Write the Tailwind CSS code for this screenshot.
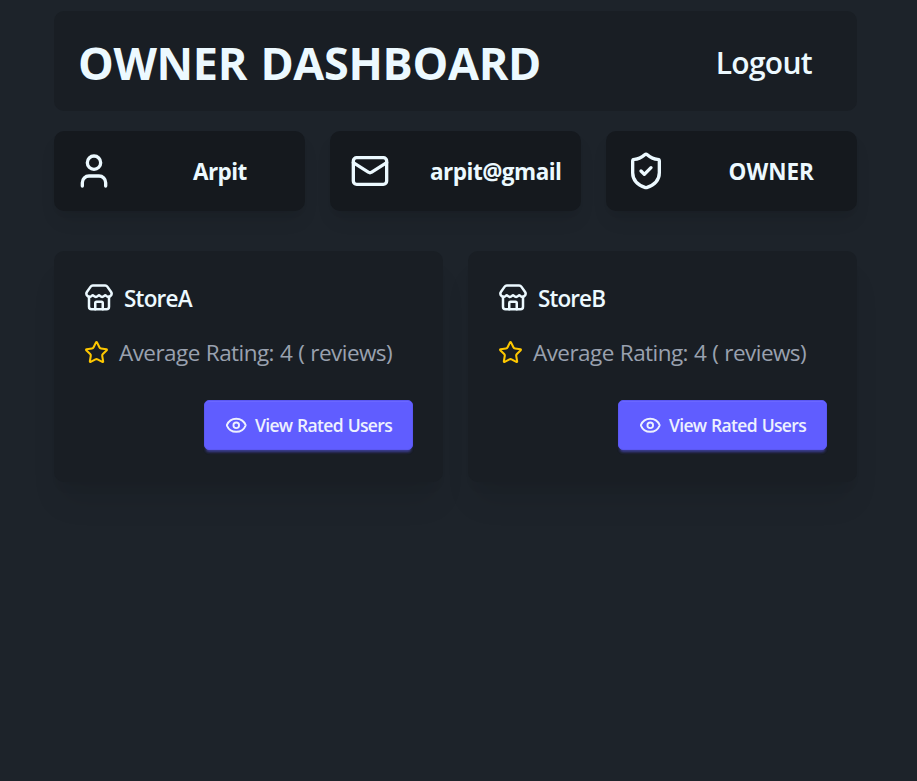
<!DOCTYPE html>
<html lang="en">
<head>
<meta charset="utf-8">
<title>Owner Dashboard</title>
<script src="https://cdn.jsdelivr.net/npm/@tailwindcss/browser@4"></script>
</head>
<body class="bg-[#1d232a] text-[#ecf9ff] font-['Open_Sans','Noto_Sans',sans-serif] min-h-screen">
<svg class="hidden">
  <symbol id="store" viewBox="0 0 24 24"><path d="M15 21v-5a1 1 0 0 0-1-1h-4a1 1 0 0 0-1 1v5"/><path d="M17.774 10.31a1.12 1.12 0 0 0-1.549 0 2.5 2.5 0 0 1-3.451 0 1.12 1.12 0 0 0-1.548 0 2.5 2.5 0 0 1-3.452 0 1.12 1.12 0 0 0-1.549 0 2.5 2.5 0 0 1-3.77-3.248l2.889-4.184A2 2 0 0 1 7 2h10a2 2 0 0 1 1.653.873l2.895 4.192a2.5 2.5 0 0 1-3.774 3.244"/><path d="M4 10.95V19a2 2 0 0 0 2 2h12a2 2 0 0 0 2-2v-8.05"/></symbol>
  <symbol id="star" viewBox="0 0 24 24"><path d="M11.525 2.295a.53.53 0 0 1 .95 0l2.31 4.679a2.123 2.123 0 0 0 1.595 1.16l5.166.756a.53.53 0 0 1 .294.904l-3.736 3.638a2.123 2.123 0 0 0-.611 1.878l.882 5.14a.53.53 0 0 1-.771.56l-4.618-2.428a2.122 2.122 0 0 0-1.973 0L6.396 21.01a.53.53 0 0 1-.77-.56l.881-5.139a2.122 2.122 0 0 0-.611-1.879L2.16 9.795a.53.53 0 0 1 .294-.906l5.165-.755a2.122 2.122 0 0 0 1.597-1.16z"/></symbol>
  <symbol id="eye" viewBox="0 0 24 24"><path d="M2.062 12.348a1 1 0 0 1 0-.696 10.75 10.75 0 0 1 19.876 0 1 1 0 0 1 0 .696 10.75 10.75 0 0 1-19.876 0"/><circle cx="12" cy="12" r="3"/></symbol>
</svg>
<div class="ml-[54px] w-[803px] pt-[11px] whitespace-nowrap">
  <header class="flex h-[100px] items-center justify-between rounded-[10px] bg-[#191e24] pl-6 pr-[45px]">
    <h1 class="pt-[3px] text-[45px] leading-none font-bold tracking-[-0.35px] [word-spacing:2px]">OWNER DASHBOARD</h1>
    <button class="pt-[3px] text-[30px] leading-none font-semibold tracking-[-0.7px]">Logout</button>
  </header>

  <section class="mt-5 grid grid-cols-3 gap-[25px]">
    <div class="flex h-20 items-center rounded-[10px] bg-[#15191e] px-5 shadow-[0_12px_19px_-4px_#00000016,0_5px_8px_-5px_#00000016]">
      <svg class="size-10 shrink-0" viewBox="0 0 24 24" fill="none" stroke="currentColor" stroke-width="2" stroke-linecap="round" stroke-linejoin="round"><path d="M19 21v-2a4 4 0 0 0-4-4H9a4 4 0 0 0-4 4v2"/><circle cx="12" cy="7" r="4"/></svg>
      <span class="ml-[79px] pt-0.5 text-[22.5px] font-bold tracking-[-0.6px]">Arpit</span>
    </div>
    <div class="flex h-20 items-center rounded-[10px] bg-[#15191e] px-5 shadow-[0_12px_19px_-4px_#00000016,0_5px_8px_-5px_#00000016]">
      <svg class="size-10 shrink-0" viewBox="0 0 24 24" fill="none" stroke="currentColor" stroke-width="2" stroke-linecap="round" stroke-linejoin="round"><rect width="20" height="16" x="2" y="4" rx="2"/><path d="m22 7-8.97 5.7a1.94 1.94 0 0 1-2.06 0L2 7"/></svg>
      <span class="ml-10 pt-0.5 text-[22.5px] font-bold tracking-[-0.5px]">arpit@gmail</span>
    </div>
    <div class="flex h-20 items-center rounded-[10px] bg-[#15191e] px-5 shadow-[0_12px_19px_-4px_#00000016,0_5px_8px_-5px_#00000016]">
      <svg class="size-10 shrink-0" viewBox="0 0 24 24" fill="none" stroke="currentColor" stroke-width="2" stroke-linecap="round" stroke-linejoin="round"><path d="M20 13c0 5-3.500 7.500-7.660 8.950a1 1 0 0 1-.67-.01C7.500 20.500 4 18 4 13V6a1 1 0 0 1 1-1c2 0 4.500-1.200 6.240-2.720a1.170 1.170 0 0 1 1.520 0C14.510 3.810 17 5 19 5a1 1 0 0 1 1 1z"/><path d="m9 12 2 2 4-4"/></svg>
      <span class="ml-[62.5px] pt-0.5 text-[22.5px] font-bold tracking-[0px]">OWNER</span>
    </div>
  </section>

  <main class="mt-10 grid grid-cols-2 gap-[25px]">
    <article class="h-[231px] rounded-[10px] bg-[#191e24] px-[30px] pt-[30px] shadow-[0_25px_31px_-6px_#00000014,0_10px_12px_-7px_#00000010]">
      <h2 class="flex h-[34px] items-center gap-[10px] text-[22.5px] font-semibold tracking-[-0.8px]"><svg class="size-[30px]" fill="none" stroke="currentColor" stroke-width="2" stroke-linecap="round" stroke-linejoin="round"><use href="#store"/></svg><span class="pt-px">StoreA</span></h2>
      <p class="mt-5 flex h-[35px] items-center gap-[10px] text-[22.5px] tracking-[-0.55px] [word-spacing:0.7px] text-[#99a1af]"><svg class="size-[25px] text-[#fdc700]" fill="none" stroke="currentColor" stroke-width="2" stroke-linecap="round" stroke-linejoin="round"><use href="#star"/></svg>Average Rating: 4 ( reviews)</p>
      <button class="mt-[30px] ml-auto flex h-[50px] w-[209px] items-center justify-center gap-[7.5px] rounded-[5px] border border-[#5b58f2] bg-[#605dff] text-[17.5px] font-semibold tracking-[-0.65px] [word-spacing:0.7px] text-[#edf1fe] shadow-[0_4px_3px_-2px_#605dff4d,0_4px_3px_-2px_#605dff4d,inset_0_1px_0_#ffffff10]"><svg class="size-[22.5px]" fill="none" stroke="currentColor" stroke-width="2" stroke-linecap="round" stroke-linejoin="round"><use href="#eye"/></svg>View Rated Users</button>
    </article>
    <article class="h-[231px] rounded-[10px] bg-[#191e24] px-[30px] pt-[30px] shadow-[0_25px_31px_-6px_#00000014,0_10px_12px_-7px_#00000010]">
      <h2 class="flex h-[34px] items-center gap-[10px] text-[22.5px] font-semibold tracking-[-0.9px]"><svg class="size-[30px]" fill="none" stroke="currentColor" stroke-width="2" stroke-linecap="round" stroke-linejoin="round"><use href="#store"/></svg><span class="pt-px">StoreB</span></h2>
      <p class="mt-5 flex h-[35px] items-center gap-[10px] text-[22.5px] tracking-[-0.55px] [word-spacing:0.7px] text-[#99a1af]"><svg class="size-[25px] text-[#fdc700]" fill="none" stroke="currentColor" stroke-width="2" stroke-linecap="round" stroke-linejoin="round"><use href="#star"/></svg>Average Rating: 4 ( reviews)</p>
      <button class="mt-[30px] ml-auto flex h-[50px] w-[209px] items-center justify-center gap-[7.5px] rounded-[5px] border border-[#5b58f2] bg-[#605dff] text-[17.5px] font-semibold tracking-[-0.65px] [word-spacing:0.7px] text-[#edf1fe] shadow-[0_4px_3px_-2px_#605dff4d,0_4px_3px_-2px_#605dff4d,inset_0_1px_0_#ffffff10]"><svg class="size-[22.5px]" fill="none" stroke="currentColor" stroke-width="2" stroke-linecap="round" stroke-linejoin="round"><use href="#eye"/></svg>View Rated Users</button>
    </article>
  </main>
</div>
</body>
</html>
